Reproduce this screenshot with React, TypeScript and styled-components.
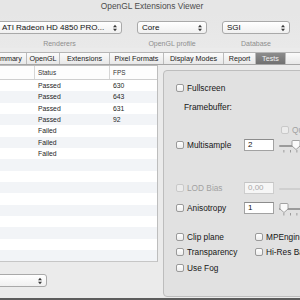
import styled, { createGlobalStyle } from "styled-components";

const GlobalStyle = createGlobalStyle`
  html, body {
    margin: 0;
    padding: 0;
    background: #5c5c5c;
  }
  body {
    width: 300px;
    height: 300px;
    overflow: hidden;
    font-family: "Liberation Sans", Arial, sans-serif;
  }
`;

const Window = styled.div`
  width: 300px;
  height: 298px;
  overflow: hidden;
  display: flex;
  flex-direction: column;
  background: #ebebeb;
  color: #1b1b1b;
`;

const TitleBar = styled.div`
  height: 13px;
  line-height: 13px;
  padding-left: 4px;
  text-align: center;
  font-size: 8.4px;
  color: #4c4c4c;
  background: #e6e6e6;
`;

const Toolbar = styled.div`
  display: flex;
  gap: 15px;
  padding-top: 8px;
  margin-left: -3px;
  background: linear-gradient(#e6e6e6, #e9e9e9);
`;

const PopupGroup = styled.div<{ $w: number }>`
  flex: none;
  width: ${(p) => p.$w}px;
  display: flex;
  flex-direction: column;
  align-items: center;
  gap: 5px;
`;

const Popup = styled.div`
  align-self: stretch;
  height: 13px;
  box-sizing: border-box;
  border: 1px solid #a9a9a9;
  border-radius: 3px;
  background: linear-gradient(#ffffff, #f0f0f0);
  display: flex;
  align-items: center;
  justify-content: space-between;
  padding: 0 4px;
  font-size: 8px;
  color: #111;
  white-space: nowrap;
`;

const ToolLabel = styled.div`
  height: 9px;
  line-height: 9px;
  font-size: 7px;
  color: #8e8e8e;
`;

const TabBar = styled.div`
  display: flex;
  height: 13px;
  margin: 4px 0 0 -13px;
  box-sizing: border-box;
  border-top: 1px solid #b5b5b5;
  border-bottom: 1px solid #a5a5a5;
  background: linear-gradient(#fbfbfb, #e8e8e8);
`;

const Tab = styled.div<{ $w: number; $active?: boolean }>`
  flex: none;
  width: ${(p) => p.$w}px;
  box-sizing: border-box;
  border-right: 1px solid #bcbcbc;
  font-size: 7.2px;
  line-height: 11px;
  text-align: center;
  white-space: nowrap;
  overflow: hidden;
  color: ${(p) => (p.$active ? "#f2f2f2" : "#222")};
  background: ${(p) => (p.$active ? "linear-gradient(#8c8c8c, #717171)" : "none")};
`;

const Content = styled.div`
  flex: 1;
  display: flex;
  min-height: 0;
`;

const Sidebar = styled.div`
  flex: none;
  width: 158px;
  display: flex;
  flex-direction: column;
`;

const Table = styled.div`
  background: #fff;
  border-top: 1px solid #bdbdbd;
  border-right: 1px solid #bdbdbd;
  border-bottom: 1px solid #c6c6c6;
`;

const HeaderRow = styled.div`
  display: grid;
  grid-template-columns: 35px 75px 1fr;
  height: 14px;
  box-sizing: border-box;
  border-bottom: 1px solid #cfcfcf;
  background: #fdfdfd;
`;

const HeaderCell = styled.div<{ $sep?: boolean }>`
  padding-left: 3px;
  font-size: 6.4px;
  line-height: 13px;
  color: #333;
  border-right: ${(p) => (p.$sep ? "1px solid #d6d6d6" : "none")};
`;

const Row = styled.div<{ $odd: boolean }>`
  display: grid;
  grid-template-columns: 35px 75px 1fr;
  height: 11.33px;
  background: ${(p) => (p.$odd ? "#f2f4f7" : "#ffffff")};
`;

const Cell = styled.div`
  padding-left: 3px;
  font-size: 6.8px;
  line-height: 11.33px;
  color: #1e1e1e;
`;

const BottomPopup = styled(Popup)`
  align-self: flex-start;
  width: 58px;
  margin: 12px 0 0 -11px;
`;

const Panel = styled.div`
  flex: none;
  width: 160px;
  margin: 5px 0 1px 5px;
  box-sizing: border-box;
  border: 1px solid #bdbdbd;
  border-radius: 4px;
  background: #e1e1e1;
  padding: 11px 0 0 12px;
  display: flex;
  flex-direction: column;
`;

const OptionRow = styled.div<{ $top: number; $indent?: number }>`
  display: flex;
  align-items: center;
  height: 12px;
  margin-top: ${(p) => p.$top}px;
  padding-left: ${(p) => p.$indent ?? 0}px;
  white-space: nowrap;
`;

const OptionCell = styled.div<{ $w: number }>`
  flex: none;
  width: ${(p) => p.$w}px;
  display: flex;
  align-items: center;
`;

const Check = styled.span<{ $disabled?: boolean }>`
  flex: none;
  width: 8px;
  height: 8px;
  box-sizing: border-box;
  border: 1px solid ${(p) => (p.$disabled ? "#c9c9c9" : "#9a9a9a")};
  border-radius: 2px;
  background: ${(p) =>
    p.$disabled ? "#ececec" : "linear-gradient(#ffffff, #ececec)"};
  margin-right: 3px;
`;

const OptionText = styled.span<{ $disabled?: boolean }>`
  font-size: 8.3px;
  color: ${(p) => (p.$disabled ? "#a2a2a2" : "#161616")};
`;

const SectionLabel = styled.span`
  font-size: 8.4px;
  color: #161616;
`;

const Field = styled.div<{ $disabled?: boolean }>`
  flex: none;
  width: 30px;
  height: 12px;
  box-sizing: border-box;
  border: 1px solid ${(p) => (p.$disabled ? "#cdcdcd" : "#a2a2a2")};
  border-top-color: ${(p) => (p.$disabled ? "#c4c4c4" : "#8c8c8c")};
  background: ${(p) => (p.$disabled ? "#f6f6f6" : "#ffffff")};
  padding-left: 3px;
  font-size: 8px;
  line-height: 10px;
  color: ${(p) => (p.$disabled ? "#a8a8a8" : "#111")};
`;

const SliderBox = styled.svg`
  flex: none;
  margin-left: 5px;
  overflow: visible;
`;

const Arrows = () => (
  <svg width="4" height="8" viewBox="0 0 4 8">
    <path d="M0 3.2 L2 0.8 L4 3.2 Z M0 4.8 L2 7.2 L4 4.8 Z" fill="#3a3a3a" />
  </svg>
);

const Slider = ({ knob, disabled }: { knob?: number; disabled?: boolean }) => (
  <SliderBox width="40" height="12" viewBox="0 0 40 12">
    <rect x="0" y="6" width="40" height="2" rx="1" fill={disabled ? "#cfcfcf" : "#9a9a9a"} />
    {!disabled &&
      [4.5, 11, 17.5, 24, 30.5, 37].map((x) => (
        <rect key={x} x={x} y="11" width="0.8" height="2.5" fill="#8a8a8a" />
      ))}
    {knob !== undefined && (
      <path
        d={`M${knob} 2.5 Q${knob} 1.5 ${knob + 1} 1.5 H${knob + 7} Q${knob + 8} 1.5 ${knob + 8} 2.5 V7 L${knob + 4} 10.5 L${knob} 7 Z`}
        fill="#fafafa"
        stroke="#8e8e8e"
        strokeWidth="0.8"
      />
    )}
  </SliderBox>
);

const CheckOption = ({ label, disabled }: { label: string; disabled?: boolean }) => (
  <>
    <Check $disabled={disabled} />
    <OptionText $disabled={disabled}>{label}</OptionText>
  </>
);

const tabs = [
  { name: "Summary", w: 40 },
  { name: "OpenGL", w: 33 },
  { name: "Extensions", w: 50 },
  { name: "Pixel Formats", w: 54 },
  { name: "Display Modes", w: 60 },
  { name: "Report", w: 32 },
  { name: "Tests", w: 30, active: true },
  { name: "Database", w: 60 },
];

const results = [
  { status: "Passed", fps: "630" },
  { status: "Passed", fps: "643" },
  { status: "Passed", fps: "631" },
  { status: "Passed", fps: "92" },
  { status: "Failed", fps: "" },
  { status: "Failed", fps: "" },
  { status: "Failed", fps: "" },
];

const rows = Array.from({ length: 16 }, (_, i) => results[i] ?? { status: "", fps: "" });

export default function App() {
  return (
    <>
      <GlobalStyle />
      <Window>
        <TitleBar>OpenGL Extensions Viewer</TitleBar>
        <Toolbar>
          <PopupGroup $w={125}>
            <Popup>
              ATI Radeon HD 4850 PRO...
              <Arrows />
            </Popup>
            <ToolLabel>Renderers</ToolLabel>
          </PopupGroup>
          <PopupGroup $w={70}>
            <Popup>
              Core
              <Arrows />
            </Popup>
            <ToolLabel>OpenGL profile</ToolLabel>
          </PopupGroup>
          <PopupGroup $w={68}>
            <Popup>
              SGI
              <Arrows />
            </Popup>
            <ToolLabel>Database</ToolLabel>
          </PopupGroup>
        </Toolbar>
        <TabBar>
          {tabs.map((t) => (
            <Tab key={t.name} $w={t.w} $active={t.active}>
              {t.name}
            </Tab>
          ))}
        </TabBar>
        <Content>
          <Sidebar>
            <Table>
              <HeaderRow>
                <HeaderCell $sep />
                <HeaderCell $sep>Status</HeaderCell>
                <HeaderCell>FPS</HeaderCell>
              </HeaderRow>
              {rows.map((r, i) => (
                <Row key={i} $odd={i % 2 === 1}>
                  <Cell />
                  <Cell>{r.status}</Cell>
                  <Cell>{r.fps}</Cell>
                </Row>
              ))}
            </Table>
            <BottomPopup>
              <span />
              <Arrows />
            </BottomPopup>
          </Sidebar>
          <Panel>
            <OptionRow $top={0}>
              <CheckOption label="Fullscreen" />
            </OptionRow>
            <OptionRow $top={7} $indent={8}>
              <SectionLabel>Framebuffer:</SectionLabel>
            </OptionRow>
            <OptionRow $top={11} $indent={105}>
              <CheckOption label="Quincunx" disabled />
            </OptionRow>
            <OptionRow $top={3}>
              <OptionCell $w={68}>
                <CheckOption label="Multisample" />
              </OptionCell>
              <Field>2</Field>
              <Slider knob={13} />
            </OptionRow>
            <OptionRow $top={31}>
              <OptionCell $w={68}>
                <CheckOption label="LOD Bias" disabled />
              </OptionCell>
              <Field $disabled>0,00</Field>
              <Slider disabled />
            </OptionRow>
            <OptionRow $top={8}>
              <OptionCell $w={68}>
                <CheckOption label="Anisotropy" />
              </OptionCell>
              <Field>1</Field>
              <Slider knob={1} />
            </OptionRow>
            <OptionRow $top={17}>
              <OptionCell $w={79}>
                <CheckOption label="Clip plane" />
              </OptionCell>
              <CheckOption label="MPEngine" />
            </OptionRow>
            <OptionRow $top={3}>
              <OptionCell $w={79}>
                <CheckOption label="Transparency" />
              </OptionCell>
              <CheckOption label="Hi-Res Background" />
            </OptionRow>
            <OptionRow $top={4}>
              <CheckOption label="Use Fog" />
            </OptionRow>
          </Panel>
        </Content>
      </Window>
    </>
  );
}
